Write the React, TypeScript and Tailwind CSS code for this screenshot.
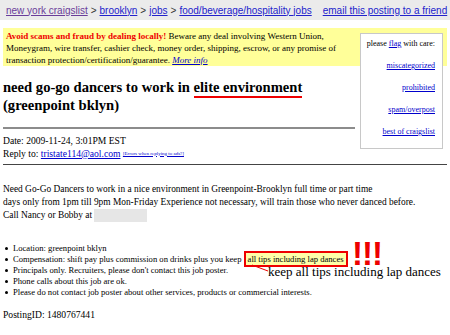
import React from 'react';

const sep = <span className="mx-[3px] text-[#333]">&gt;</span>;

function FlagBox() {
  const links = ['miscategorized', 'prohibited', 'spam/overpost', 'best of craigslist'];
  return (
    <div className="float-right ml-[5px] mr-[4px] mt-[3px] h-[116px] w-[83px] border border-[#c8c8c8] bg-white pr-[7px] pt-[5px] text-[8px] leading-[10px]">
      <div className="whitespace-nowrap text-right">
        please <a className="text-[#0000cc] underline">flag</a> with care:
      </div>
      <div className="mt-[12px] flex flex-col items-end gap-[12px]">
        {links.map((l) => (
          <a key={l} className="text-[#0000cc] underline">
            {l}
          </a>
        ))}
      </div>
    </div>
  );
}

const bullets = [
  'Location: greenpoint bklyn',
  null,
  "Principals only. Recruiters, please don't contact this job poster.",
  'Phone calls about this job are ok.',
  'Please do not contact job poster about other services, products or commercial interests.',
];

export default function App() {
  return (
    <div className="relative h-[335px] w-[450px] overflow-hidden bg-white font-['Liberation_Serif',serif] text-black">
      <div className="flex h-[20px] items-center whitespace-nowrap bg-[#ebebeb] pl-[6px] font-['Liberation_Sans',Arial,sans-serif] text-[10px]">
        <a className="text-[#6a3d9a] underline">new york craigslist</a>
        {sep}
        <a className="text-[#2222cc] underline">brooklyn</a>
        {sep}
        <a className="text-[#2222cc] underline">jobs</a>
        {sep}
        <a className="text-[#2222cc] underline">food/beverage/hospitality jobs</a>
        <a className="ml-[11px] text-[#2222cc] underline">email this posting to a friend</a>
      </div>

      <div className="px-[3px] pt-[8px]">
        <div className="bg-[#ffff99] pl-[3px] pt-[2px] text-[9px] leading-[12px]">
          <FlagBox />
          <b className="text-[#ee0000]">Avoid scams and fraud by dealing locally!</b> Beware any deal involving Western
          Union,
          <br />
          Moneygram, wire transfer, cashier check, money order, shipping, escrow, or any promise of
          <br />
          transaction protection/certification/guarantee.{' '}
          <a className="italic text-[#0000cc] underline">More info</a>
        </div>

        <h2 className="mt-[12px] text-[14.6px] font-bold leading-[18px]">
          need go-go dancers to work in{' '}
          <span className="border-b-[2px] border-[#ee0000] pb-[1px]">elite environment</span>
          <br />
          (greenpoint bklyn)
        </h2>
        <div className="mt-[13px] overflow-hidden border-t-2 border-[#8c8c8c]" />

        <div className="mt-[5px] text-[9.6px] leading-[13px]">
          <div>Date: 2009-11-24, 3:01PM EST</div>
          <div>
            Reply to: <a className="text-[#0000cc] underline">tristate114@aol.com</a>{' '}
            <sup className="text-[5px] text-[#0000cc] underline">[Errors when replying to ads?]</sup>
          </div>
        </div>
        <div className="clear-both mt-[4px] border-t border-[#444]" />

        <div className="mt-[18px] whitespace-nowrap text-[9.4px] leading-[13px]">
          Need Go-Go Dancers to work in a nice environment in Greenpoint-Brooklyn full time or part time
          <br />
          days only from 1pm till 9pm Mon-Friday Experience not necessary, will train those who never danced before.
          <br />
          Call Nancy or Bobby at{' '}
          <span className="inline-block h-[13px] w-[53px] bg-[#e6e6e6] align-middle" />
        </div>

        <ul className="mt-[21px] text-[8.6px] leading-[11px]">
          {bullets.map((t, i) => (
            <li key={i} className="flex h-[11px] items-center whitespace-nowrap">
              <span className="ml-[2px] mr-[5px] inline-block h-[3px] w-[3px] rounded-full bg-black" />
              {t ?? (
                <span>
                  Compensation: shift pay plus commission on drinks plus you keep{' '}
                  <span className="border-2 border-[#ee0000] bg-[#ffffa8] px-[2px] py-[1px]">
                    all tips including lap dances
                  </span>
                </span>
              )}
            </li>
          ))}
        </ul>

        <div className="mt-[10px] text-[9.6px] leading-[13px]">PostingID: 1480767441</div>
      </div>

      <div className="absolute left-[352px] top-[237px] font-['Liberation_Sans',Arial,sans-serif] text-[33px] font-bold leading-[33px] tracking-[-1px] text-[#ee0000]">
        !!!
      </div>
      <svg className="absolute left-0 top-0" width="450" height="335">
        <line x1="252" y1="265" x2="268" y2="271" stroke="#ee0000" strokeWidth="1" />
      </svg>
      <div className="absolute left-[268px] top-[264px] whitespace-nowrap text-[13px] leading-[16px]">
        keep all tips including lap dances
      </div>
    </div>
  );
}
